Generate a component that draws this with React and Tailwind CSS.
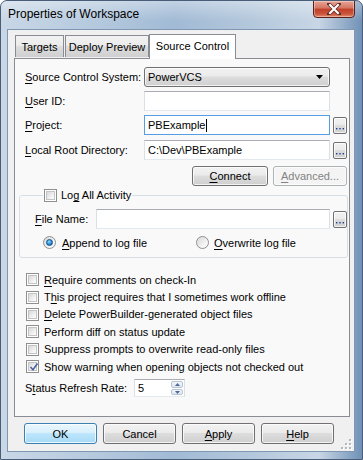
import React from "react";

const U = ({ children }) => (
  <span className="underline decoration-1 underline-offset-[2px]">{children}</span>
);

const btnFace =
  "bg-[linear-gradient(#f2f2f2,#ebebeb_45%,#dddddd_50%,#cfcfcf)] border-[#707070]";

function Btn({ children, className = "", isDefault = false, disabled = false }) {
  let face = btnFace + " text-black";
  if (isDefault) {
    face =
      "bg-[linear-gradient(#eaf6fd,#d9f0fc_45%,#bee6fd_50%,#a7d9f5)] border-[#3c7fb1] text-black";
  }
  if (disabled) {
    face = "bg-[#f4f4f4] border-[#adb2b5] text-[#838383]";
  }
  return (
    <div
      className={`flex shrink-0 items-center justify-center whitespace-nowrap rounded-[3px] border shadow-[inset_0_0_0_1px_rgba(255,255,255,0.75)] ${face} ${className}`}
    >
      {children}
    </div>
  );
}

function Dots() {
  return (
    <Btn className="ml-[3px] h-[17px] w-[14px] !rounded-[2px] !items-end pb-[3px]">
      <svg width="8" height="2" viewBox="0 0 8 2">
        <rect x="0" y="0" width="1.4" height="1.4" fill="#1c3b8a" />
        <rect x="3.3" y="0" width="1.4" height="1.4" fill="#1c3b8a" />
        <rect x="6.6" y="0" width="1.4" height="1.4" fill="#1c3b8a" />
      </svg>
    </Btn>
  );
}

function TextBox({ value, className = "", focused = false, caret = false }) {
  return (
    <div
      className={`flex h-[20px] shrink-0 items-center border bg-white pl-[3px] ${
        focused
          ? "border-[#569de5]"
          : "border-[#dbdfe6] border-t-[#abadb3] border-b-[#e3e9ef]"
      } ${className}`}
    >
      <span className="whitespace-pre">{value}</span>
      {caret && <span className="ml-[1px] h-[13px] w-px bg-black" />}
    </div>
  );
}

function Check({ checked = false }) {
  return (
    <div className="flex h-[13px] w-[13px] shrink-0 items-center justify-center border border-[#8f8f8f] bg-white p-px">
      <div className="relative h-full w-full border border-[#c4c4c4] bg-[linear-gradient(135deg,#d8d8d8,#f4f4f4_70%,#ffffff)]">
        {checked && (
          <svg className="absolute left-[0px] top-[-1px]" width="10" height="10" viewBox="0 0 10 10">
            <path d="M1.5 5 L4 7.8 L8.5 1.5" fill="none" stroke="#4d62a0" strokeWidth="1.6" />
          </svg>
        )}
      </div>
    </div>
  );
}

function Radio({ checked = false }) {
  return (
    <div className="flex h-[13px] w-[13px] shrink-0 items-center justify-center rounded-full border border-[#8f8f8f] bg-[linear-gradient(135deg,#d8d8d8,#f6f6f6_70%,#ffffff)]">
      {checked && (
        <div className="h-[7px] w-[7px] rounded-full border border-[#0f4f86] bg-[radial-gradient(circle_at_40%_35%,#8fdcff,#2b8fd6_55%,#0b5a9a)]" />
      )}
    </div>
  );
}

const options = [
  { label: ["", "R", "equire comments on check-In"], checked: false },
  { label: ["T", "h", "is project requires that I sometimes work offline"], checked: false },
  { label: ["", "D", "elete PowerBuilder-generated object files"], checked: false },
  { label: ["Perform diff on status update", "", ""], checked: false },
  { label: ["Suppress prompts to overwrite read-only files", "", ""], checked: false },
  { label: ["Show warning when opening objects not checked out", "", ""], checked: true },
];

export default function App() {
  return (
    <div className="relative h-[460px] w-[363px] overflow-hidden whitespace-nowrap rounded-t-[7px] border border-[#4a5d78] bg-[linear-gradient(90deg,#c9d7e6,#b6cade_25%,#a1bad5_48%,#b4c8dc_70%,#c8d6e5_88%,#7091b6)] font-['Liberation_Sans',Arial,sans-serif] text-[11px] leading-[14px] text-black">
      <div className="pointer-events-none absolute inset-x-0 top-0 h-[20px] bg-[linear-gradient(rgba(255,255,255,0.35),rgba(255,255,255,0))]" />
      {/* title bar */}
      <div className="relative flex h-[28px] items-start justify-between">
        <div className="pl-[7px] pt-[6px] text-[12px]">Properties of Workspace</div>
        <div className="mr-[7px] mt-[-1px] flex h-[18px] w-[42px] items-center justify-center rounded-b-[4px] border border-[#5b2019] bg-[linear-gradient(#e8a596,#d47563_45%,#c13f28_50%,#c9533b_80%,#e38e6c)] shadow-[inset_0_0_0_1px_rgba(255,255,255,0.35)]">
          <svg width="14" height="12" viewBox="0 0 14 12">
            <path d="M2 1 L12 11 M12 1 L2 11" stroke="#5b2a22" strokeWidth="3.6" strokeLinecap="square" />
            <path d="M2.3 1.3 L11.7 10.7 M11.7 1.3 L2.3 10.7" stroke="#ffffff" strokeWidth="2.2" />
          </svg>
        </div>
      </div>

      {/* client */}
      <div className="relative ml-[6px] h-[423px] w-[348px] border border-[#8097b3] bg-[#f0f0f0] pl-[6px] pr-[4px] pt-[3px]">
        {/* tabs */}
        <div className="relative z-10 flex h-[25px] items-end pl-[1px]">
          <div className="mb-px flex h-[22px] w-[49px] items-center justify-center border border-b-0 border-[#898c95] bg-[linear-gradient(#f2f2f2,#ebebeb_45%,#dddddd_50%,#cfcfcf)] pt-[1px]">
            Targets
          </div>
          <div className="mb-px ml-[1px] flex h-[22px] w-[84px] items-center justify-center border border-b-0 border-[#898c95] bg-[linear-gradient(#f2f2f2,#ebebeb_45%,#dddddd_50%,#cfcfcf)] pt-[1px]">
            Deploy Preview
          </div>
          <div className="mb-[-1px] flex h-[25px] w-[87px] items-start justify-center border border-b-0 border-[#898c95] bg-white pt-[4px]">
            Source Control
          </div>
        </div>

        {/* panel */}
        <div className="relative h-[359px] w-[336px] border border-[#898c95] bg-[#f9f9f9] pt-[8px]">
          <div className="flex h-[20px] items-center pl-[10px]">
            <div className="w-[119px] shrink-0">
              <U>S</U>ource Control System:
            </div>
            <div className="flex h-[20px] w-[186px] shrink-0 items-center justify-between rounded-[3px] border border-[#707070] bg-[linear-gradient(#f2f2f2,#ebebeb_45%,#dddddd_50%,#cfcfcf)] pl-[3px] pr-[6px] shadow-[inset_0_0_0_1px_rgba(255,255,255,0.75)]">
              <span>PowerVCS</span>
              <svg width="7" height="4" viewBox="0 0 7 4">
                <path d="M0 0 H7 L3.5 4 Z" fill="#000" />
              </svg>
            </div>
          </div>
          <div className="mt-[4px] flex h-[20px] items-center pl-[10px]">
            <div className="w-[119px] shrink-0">
              <U>U</U>ser ID:
            </div>
            <TextBox value="" className="w-[186px]" />
          </div>
          <div className="mt-[4px] flex h-[20px] items-center pl-[10px]">
            <div className="w-[119px] shrink-0">
              <U>P</U>roject:
            </div>
            <TextBox value="PBExample" className="w-[186px]" focused caret />
            <Dots />
          </div>
          <div className="mt-[5px] flex h-[20px] items-center pl-[10px]">
            <div className="w-[119px] shrink-0">
              <U>L</U>ocal Root Directory:
            </div>
            <TextBox value={"C:\\Dev\\PBExample"} className="w-[186px]" />
            <Dots />
          </div>
          <div className="mt-[6px] flex h-[20px] justify-end gap-[5px] pr-[2px]">
            <Btn className="w-[76px]">
              <span>
                <U>C</U>onnect
              </span>
            </Btn>
            <Btn className="w-[74px]" disabled>
              <span>
                <U>A</U>dvanced...
              </span>
            </Btn>
          </div>

          {/* group */}
          <fieldset className="ml-[4px] mr-[2px] mt-[1px] h-[71px] rounded-[3px] border border-[#d5dfe5] pl-[15px]">
            <legend className="ml-[8px] flex h-[16px] items-center gap-[4px] px-[1px]">
              <Check />
              <span>
                Lo<U>g</U> All Activity
              </span>
            </legend>
            <div className="mt-[6px] flex h-[20px] items-center">
              <div className="w-[61px] shrink-0">
                <U>F</U>ile Name:
              </div>
              <TextBox value="" className="w-[234px]" />
              <Dots />
            </div>
            <div className="mt-[7px] flex h-[13px] items-center pl-[8px]">
              <Radio checked />
              <span className="ml-[6px] w-[134px] shrink-0">
                <U>A</U>ppend to log file
              </span>
              <Radio />
              <span className="ml-[5px]">
                <U>O</U>verwrite log file
              </span>
            </div>
          </fieldset>

          <div className="mt-[13px] flex flex-col pl-[11px]">
            {options.map((o, i) => (
              <div key={i} className="flex h-[17.4px] items-center gap-[5px]">
                <Check checked={o.checked} />
                <span>
                  {o.label[0]}
                  {o.label[1] && <U>{o.label[1]}</U>}
                  {o.label[2]}
                </span>
              </div>
            ))}
          </div>

          <div className="mt-[4px] flex h-[18px] items-center pl-[10px]">
            <div className="w-[109px] shrink-0">
              S<U>t</U>atus Refresh Rate:
            </div>
            <div className="flex h-[18px] w-[51px] items-stretch border border-[#dbdfe6] border-t-[#abadb3] border-b-[#e3e9ef] bg-white">
              <div className="flex flex-1 items-center pl-[3px]">5</div>
              <div className="flex w-[14px] flex-col gap-px p-px">
                <div className="flex flex-1 items-center justify-center rounded-[2px] border border-[#b7c4d6] bg-[linear-gradient(#f3f6fa,#dde6f0)]">
                  <svg width="5" height="3" viewBox="0 0 5 3">
                    <path d="M0 3 L2.5 0 L5 3 Z" fill="#4c6a94" />
                  </svg>
                </div>
                <div className="flex flex-1 items-center justify-center rounded-[2px] border border-[#b7c4d6] bg-[linear-gradient(#f3f6fa,#dde6f0)]">
                  <svg width="5" height="3" viewBox="0 0 5 3">
                    <path d="M0 0 L2.5 3 L5 0 Z" fill="#4c6a94" />
                  </svg>
                </div>
              </div>
            </div>
          </div>
        </div>

        {/* bottom buttons */}
        <div className="mt-[6px] flex h-[21px] gap-[6px] pl-[10px]">
          <Btn className="w-[73px]" isDefault>
            OK
          </Btn>
          <Btn className="w-[73px]">Cancel</Btn>
          <Btn className="w-[73px]">
            <span>
              <U>A</U>pply
            </span>
          </Btn>
          <Btn className="w-[73px]">
            <span>
              <U>H</U>elp
            </span>
          </Btn>
        </div>

        {/* size grip */}
        <svg className="absolute bottom-[1px] right-[2px]" width="11" height="11" viewBox="0 0 11 11">
          {[
            [8, 0], [8, 4], [4, 4], [8, 8], [4, 8], [0, 8],
          ].map(([x, y], i) => (
            <g key={i}>
              <rect x={x + 1} y={y + 1} width="2" height="2" fill="#ffffff" />
              <rect x={x} y={y} width="2" height="2" fill="#b3b9c2" />
            </g>
          ))}
        </svg>
      </div>
    </div>
  );
}
